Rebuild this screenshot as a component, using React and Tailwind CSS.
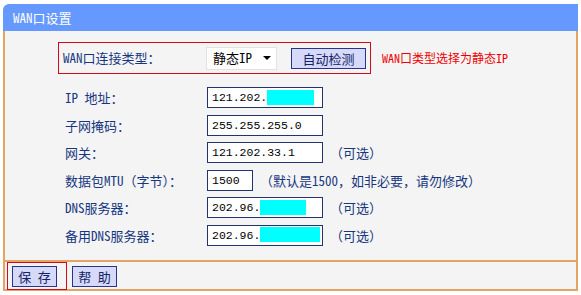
const font = "font-['Noto_Sans_Mono_CJK_SC','Liberation_Mono','Noto_Sans_CJK_SC',monospace]"

const rows = [
  { label: 'IP 地址：', value: '121.202.', mask: 'w-[47px]' },
  { label: '子网掩码：', value: '255.255.255.0' },
  { label: '网关：', value: '121.202.33.1', note: '（可选）' },
  { label: '数据包MTU（字节）：', value: '1500', narrow: true, note: '（默认是1500，如非必要，请勿修改）' },
  { label: 'DNS服务器：', value: '202.96.', mask: 'w-[46px]', note: '（可选）' },
  { label: '备用DNS服务器：', value: '202.96.', mask: 'w-[60px]', note: '（可选）' },
]

function Field({ value, mask, narrow }) {
  return (
    <div className={`${narrow ? 'w-[46px]' : 'w-[116px]'} h-[21px] border border-[#22336f] bg-white flex items-center pl-[4px] text-[11.5px] text-black font-['Liberation_Mono',monospace]`}>
      <span>{value}</span>
      {mask && <span className={`${mask} h-[15px] bg-[#00ffff] -mt-[1px]`} />}
    </div>
  )
}

function Btn({ children }) {
  return (
    <button className="w-[45px] h-[21px] border border-[#26348a] bg-[#d6d9f7] text-[#14246a] text-[13px] leading-none">
      {children}
    </button>
  )
}

export default function App() {
  return (
    <div className={`w-[581px] h-[295px] bg-white pt-[4px] px-[3px] ${font}`}>
      <div className="h-[27px] bg-[#6699ff] rounded-tl-[6px] text-white text-[13px] flex items-center pl-[10px]">
        WAN口设置
      </div>

      <div className="h-[231px] border-x-2 border-b-2 border-[#e5a466] bg-[#f4f4f4] pt-[11px] text-[#163780] text-[13px]">
        <div className="flex items-center">
          <div className="ml-[53px] w-[313px] h-[32px] border border-[#d10a1a] flex items-center pl-[4px]">
            <span className="w-[143px]">WAN口连接类型：</span>
            <div className="w-[71px] h-[23px] bg-white border border-[#e2e2e2] flex items-center pl-[6px] text-black">
              <span>静态IP</span>
              <span className="ml-auto mr-[5px] w-0 h-0 border-x-[4px] border-x-transparent border-t-[4px] border-t-black" />
            </div>
            <button className="ml-[14px] w-[75px] h-[21px] border border-[#26348a] bg-[#d6d9f7] text-[#14246a] text-[13px] leading-none">
              自动检测
            </button>
          </div>
          <span className="ml-[11px] text-[12px] text-[#ee0000]">WAN口类型选择为静态IP</span>
        </div>

        <div className="mt-[10px] pl-[60px]">
          {rows.map((r) => (
            <div key={r.label} className="h-[27.5px] flex items-center">
              <span className="w-[142px]">{r.label}</span>
              <Field value={r.value} mask={r.mask} narrow={r.narrow} />
              {r.note && <span className="ml-[7px]">{r.note}</span>}
            </div>
          ))}
        </div>
      </div>

      <div className="h-[29px] border-x-2 border-b-2 border-[#e5a466] bg-[#f4f4f4] flex items-start">
        <div className="ml-[2px] w-[60px] h-[28px] border border-[#d10a1a] flex items-center pl-[4px]">
          <Btn>保 存</Btn>
        </div>
        <div className="ml-[5px] h-[28px] flex items-center">
          <Btn>帮 助</Btn>
        </div>
      </div>
    </div>
  )
}
